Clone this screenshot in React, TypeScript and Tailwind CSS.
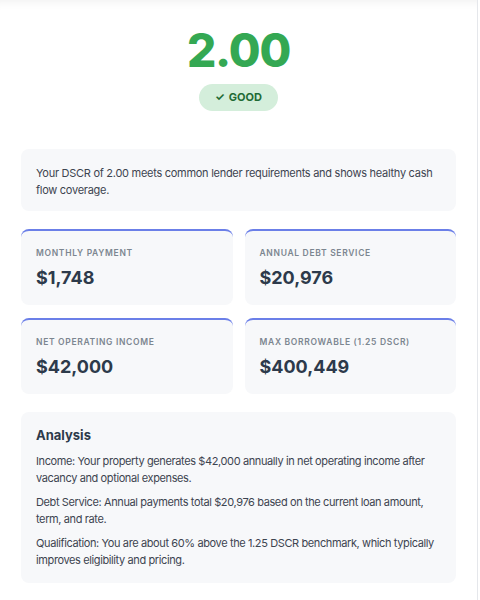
import React from 'react';

const stats = [
  { label: 'Monthly Payment', value: '$1,748' },
  { label: 'Annual Debt Service', value: '$20,976' },
  { label: 'Net Operating Income', value: '$42,000' },
  { label: 'Max Borrowable (1.25 DSCR)', value: '$400,449' },
];

const App: React.FC = () => {
  return (
    <div className="w-[478px] min-h-[600px] bg-white border-r border-gray-200 shadow-[inset_0_10px_10px_-8px_rgba(0,0,0,0.06)] font-['Inter',sans-serif] px-[21px] pt-[26px] pb-4">
      {/* Score */}
      <div className="flex flex-col items-center">
        <div className="text-[46px] leading-[48px] font-extrabold text-[#34a853] tracking-tight">2.00</div>
        <div className="mt-[10px] h-[27px] px-[16px] rounded-full bg-[#d4eedb] text-[#1f6b35] text-[11px] font-bold flex items-center gap-1">
          <span>✓</span> GOOD
        </div>
      </div>

      {/* Summary */}
      <div className="mt-[38px] bg-[#f7f8fa] rounded-lg px-[15px] pt-[16px] pb-[12px] text-[11px] leading-[17px] tracking-[-0.025em] text-[#3d4450]">
        Your DSCR of 2.00 meets common lender requirements and shows healthy cash flow coverage.
      </div>

      {/* Stats */}
      <div className="mt-[18px] grid grid-cols-2 gap-x-3 gap-y-[13px]">
        {stats.map((s) => (
          <div key={s.label} className="bg-[#f7f8fa] rounded-lg border-t-2 border-[#6b7fe8] px-[15px] pt-[16px] h-[76px]">
            <div className="text-[8.5px] font-semibold uppercase tracking-[0.08em] text-[#7c8690]">{s.label}</div>
            <div className="mt-[7px] text-[18px] leading-[22px] font-bold text-[#2d3a4b]">{s.value}</div>
          </div>
        ))}
      </div>

      {/* Analysis */}
      <div className="mt-[18px] bg-[#f7f8fa] rounded-lg px-[15px] pt-[15px] pb-[14px] text-[#3d4450] text-[11px] leading-[17px] tracking-[-0.035em]">
        <h3 className="text-[13px] font-bold text-[#2d3a4b] mb-[9px] tracking-normal">Analysis</h3>
        <p className="mb-[7px]">
          Income: Your property generates $42,000 annually in net operating income after vacancy and optional expenses.
        </p>
        <p className="mb-[7px]">
          Debt Service: Annual payments total $20,976 based on the current loan amount, term, and rate.
        </p>
        <p>
          Qualification: You are about 60% above the 1.25 DSCR benchmark, which typically improves eligibility and pricing.
        </p>
      </div>
    </div>
  );
};

export default App;
